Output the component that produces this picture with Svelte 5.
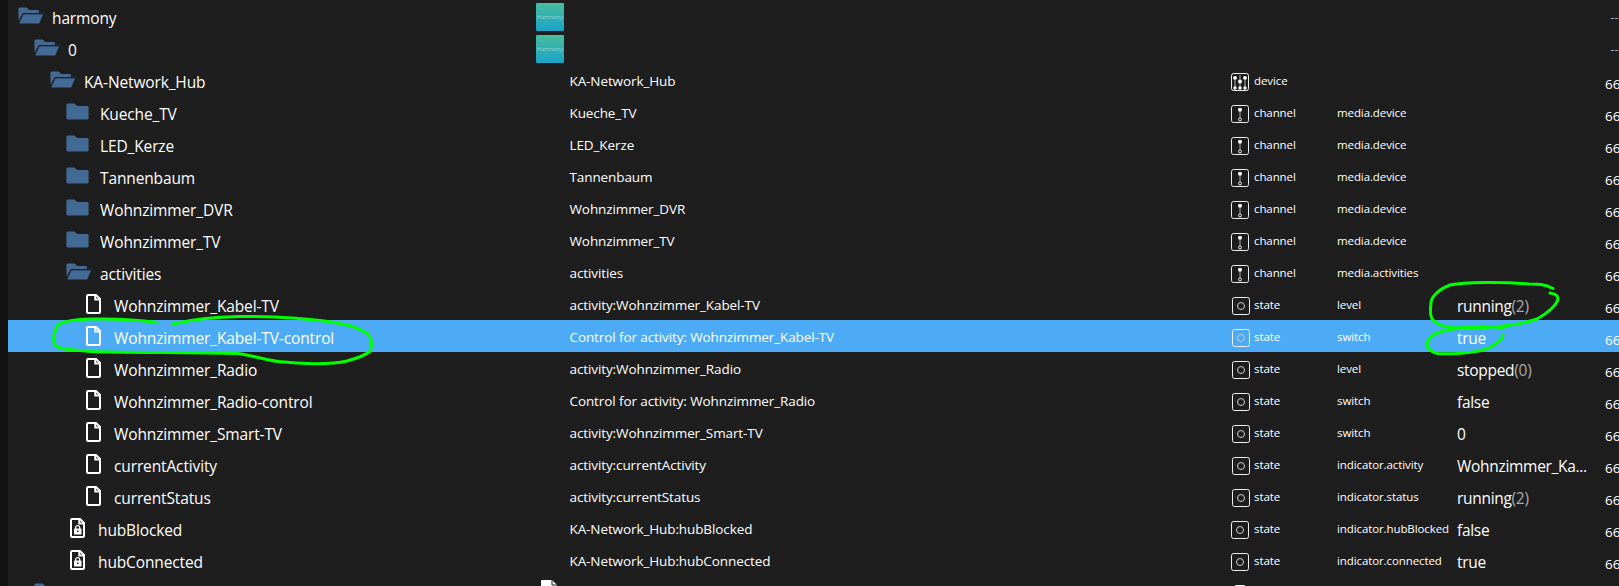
<script>
	const rows = [
		{ level: 0, icon: 'open', id: 'harmony', adapter: true },
		{ level: 1, icon: 'open', id: '0', adapter: true },
		{ level: 2, icon: 'open', id: 'KA-Network_Hub', name: 'KA-Network_Hub', type: 'device' },
		{ level: 3, icon: 'closed', id: 'Kueche_TV', name: 'Kueche_TV', type: 'channel', role: 'media.device' },
		{ level: 3, icon: 'closed', id: 'LED_Kerze', name: 'LED_Kerze', type: 'channel', role: 'media.device' },
		{ level: 3, icon: 'closed', id: 'Tannenbaum', name: 'Tannenbaum', type: 'channel', role: 'media.device' },
		{ level: 3, icon: 'closed', id: 'Wohnzimmer_DVR', name: 'Wohnzimmer_DVR', type: 'channel', role: 'media.device' },
		{ level: 3, icon: 'closed', id: 'Wohnzimmer_TV', name: 'Wohnzimmer_TV', type: 'channel', role: 'media.device' },
		{ level: 3, icon: 'open', id: 'activities', name: 'activities', type: 'channel', role: 'media.activities' },
		{ level: 4, icon: 'file', id: 'Wohnzimmer_Kabel-TV', name: 'activity:Wohnzimmer_Kabel-TV', type: 'state', role: 'level', value: 'running', raw: '(2)' },
		{ level: 4, icon: 'file', id: 'Wohnzimmer_Kabel-TV-control', name: 'Control for activity: Wohnzimmer_Kabel-TV', type: 'state', role: 'switch', value: 'true', selected: true },
		{ level: 4, icon: 'file', id: 'Wohnzimmer_Radio', name: 'activity:Wohnzimmer_Radio', type: 'state', role: 'level', value: 'stopped', raw: '(0)' },
		{ level: 4, icon: 'file', id: 'Wohnzimmer_Radio-control', name: 'Control for activity: Wohnzimmer_Radio', type: 'state', role: 'switch', value: 'false' },
		{ level: 4, icon: 'file', id: 'Wohnzimmer_Smart-TV', name: 'activity:Wohnzimmer_Smart-TV', type: 'state', role: 'switch', value: '0' },
		{ level: 4, icon: 'file', id: 'currentActivity', name: 'activity:currentActivity', type: 'state', role: 'indicator.activity', value: 'Wohnzimmer_Ka...' },
		{ level: 4, icon: 'file', id: 'currentStatus', name: 'activity:currentStatus', type: 'state', role: 'indicator.status', value: 'running', raw: '(2)' },
		{ level: 3, icon: 'lock', id: 'hubBlocked', name: 'KA-Network_Hub:hubBlocked', type: 'state', role: 'indicator.hubBlocked', value: 'false' },
		{ level: 3, icon: 'lock', id: 'hubConnected', name: 'KA-Network_Hub:hubConnected', type: 'state', role: 'indicator.connected', value: 'true' }
	];
</script>

{#snippet treeIcon(icon)}
	{#if icon === 'open'}
		<svg class="folder" width="26" height="18" viewBox="0 0 26 18">
			<path d="M.5 14V2Q.5.5 2 .5h6.5L11.500 3H19.500Q21 3 21 4.500V6H6.500Q4.800 6 4 7.300Z" />
			<path d="M6.500 7.300H25.200L21.500 15.700Q21.100 16.500 20 16.500H1.200L5 8.200Q5.500 7.300 6.500 7.300Z" />
		</svg>
	{:else if icon === 'closed'}
		<svg class="folder" width="26" height="18" viewBox="0 0 26 18">
			<path d="M2 .4H8.600L11.200 3H21Q22.600 3 22.600 4.600V15Q22.600 16.600 21 16.600H2Q.4 16.600.4 15V2Q.4.4 2 .4Z" />
		</svg>
	{:else}
		<svg class="file" width="16" height="20" viewBox="0 0 16 20">
			<path d="M1 2Q1 1 2 1H10L14 5V18Q14 19 13 19H2Q1 19 1 18Z" />
			<path d="M9.300 1V5.500H14" />
			{#if icon === 'lock'}
				<rect class="body" x="4" y="10.500" width="7.500" height="6" rx=".6" />
				<path class="shackle" d="M5.700 11V9.500Q5.700 7.600 7.700 7.600T9.700 9.500V11" />
				<rect class="hole" x="7" y="12.500" width="1.500" height="1.500" />
			{/if}
		</svg>
	{/if}
{/snippet}

{#snippet typeIcon(type)}
	<svg class="kind" width="18" height="18" viewBox="0 0 18 18">
		<rect x=".5" y=".5" width="17" height="17" rx="2" />
		{#if type === 'device'}
			<path class="track" d="M4 4v11M9 2v13M14 4v11" />
			<g class="dots">
				<circle cx="4" cy="4.800" r="1.900" />
				<circle cx="9" cy="8.500" r="1.900" />
				<circle cx="14" cy="4.800" r="1.900" />
				<circle cx="4" cy="15" r="1.700" />
				<circle cx="9" cy="15" r="1.700" />
				<circle cx="14" cy="15" r="1.700" />
			</g>
		{:else if type === 'channel'}
			<path class="track" d="M9 5v8" />
			<circle class="dots" cx="9" cy="4.700" r="2" />
			<circle cx="9" cy="14.500" r="1.500" />
		{:else}
			<circle class="ring" cx="9" cy="9" r="3.500" />
		{/if}
	</svg>
{/snippet}

<div class="browser">
	{#each rows as row}
		<div class="row" class:selected={row.selected}>
			<div class="id level-{row.level}">
				{@render treeIcon(row.icon)}
				<span>{row.id}</span>
			</div>
			<div class="logo">
				{#if row.adapter}<span class="adapter">Harmony</span>{/if}
			</div>
			<div class="name">{row.name ?? ''}</div>
			<div class="type" class:shifted={row.level === 4}>
				{#if row.type}
					{@render typeIcon(row.type)}
					<span>{row.type}</span>
				{/if}
			</div>
			<div class="role">{row.role ?? ''}</div>
			<div class="value">{row.value ?? ''}<span class="raw">{row.raw ?? ''}</span></div>
			<div class="acl" class:empty={row.adapter}>{row.adapter ? '---' : '664'}</div>
		</div>
	{/each}
	<div class="row">
		<div class="id level-1">{@render treeIcon('open')}</div>
		<div class="logo">
			<svg class="page" width="18" height="22" viewBox="0 0 18 22">
				<path d="M1 2Q1 1 2 1H12L17 6V21H1Z" />
				<path class="fold" d="M12 1V6H17" />
			</svg>
		</div>
		<div class="name"></div>
		<div class="type">
			<svg class="knob" width="18" height="18" viewBox="0 0 18 18">
				<rect x="3" y="0" width="12" height="16" rx="3" />
			</svg>
		</div>
	</div>

	<!-- marker strokes over the activity rows -->
	<svg class="marker" width="1619" height="586" viewBox="0 0 1619 586">
		<path d="M157 322.500C140 320 115 318.500 92 319C75 319.500 60 321.500 57 326C54 333 53 341 55 345C60 350 75 350 92 351.500C130 353 190 352 238 353.500C250 355 265 360 278 361.500C300 364 330 365 347 361C358 358 367 354 370.500 351C372 343 372 338 368 334C360 329 350 325 342 324C320 319 275 316 240 316.500C210 317 185 321 173 324" />
		<path d="M1553 288.500C1545 284 1537 284 1529 284C1500 281.500 1465 282 1450 285C1437 290 1431 298 1431 303C1430 311 1430 317 1433 320C1438 325 1448 328 1459 328C1490 328 1520 325 1537 319C1548 313 1558 304 1558 298C1557 294 1554 294 1550 293" />
		<path d="M1503 328.500C1490 325 1465 326 1447 330C1433 333 1428 339 1427 344C1427 349 1432 353 1438 353.500C1455 354 1477 354 1491 347C1499 342 1503 338 1503 335" />
	</svg>
</div>

<style>
	:global(body) {
		margin: 0;
		background: #121212;
	}

	.browser {
		position: relative;
		box-sizing: border-box;
		height: 586px;
		padding-left: 8px;
		overflow: hidden;
		color: #fff;
		font-family: 'Open Sans', 'Noto Sans', sans-serif;
		background: #121212;
	}

	.row {
		display: grid;
		grid-template-columns: 528px 33px 660px 108px 120px 149px 39px;
		height: 32px;
		align-items: center;
		white-space: nowrap;
		background: #1e1e1e;
	}

	.selected {
		background: #4dabf5;
	}

	.id {
		display: flex;
		align-items: center;
		padding-left: 10px;
		font-size: 15.5px;
		letter-spacing: -0.13px;
	}

	.id span {
		padding-top: 3px;
	}

	.level-1 {
		padding-left: 26px;
	}

	.level-2 {
		padding-left: 42px;
	}

	.level-3 {
		padding-left: 58px;
	}

	.level-4 {
		padding-left: 74px;
	}

	.folder {
		margin: 0 8px 1px 0;
		fill: #436a93;
	}

	.file {
		margin: 0 12px 0 4px;
		fill: none;
		stroke: #fff;
		stroke-width: 2;
	}

	.file .body {
		fill: #fff;
		stroke: none;
	}

	.file .shackle {
		stroke-width: 1.2;
	}

	.file .hole {
		fill: #1e1e1e;
		stroke: none;
	}

	.logo {
		height: 28px;
		padding-top: 2px;
	}

	.adapter {
		display: flex;
		width: 28px;
		height: 28px;
		align-items: center;
		justify-content: center;
		border-radius: 1px;
		color: #8fd5d5;
		font-size: 6px;
		background: linear-gradient(#48bd9c, #1ba3c9);
	}

	.name {
		padding: 2px 0 0 0.5px;
		font-size: 13.5px;
		letter-spacing: -0.1px;
	}

	.type {
		display: flex;
		gap: 5px;
		padding: 1px 0 0 2px;
		font-size: 11.5px;
		letter-spacing: -0.1px;
	}

	.type span {
		padding-top: 2px;
	}

	.kind {
		margin-top: 2px;
		fill: none;
		stroke: #eee;
	}

	.kind .track {
		stroke: #aaa;
	}

	.kind .dots {
		fill: #fff;
		stroke: none;
	}

	.kind .ring {
		stroke: #ccc;
	}

	.shifted {
		gap: 4px;
		padding-left: 3px;
	}

	.role {
		padding-top: 1px;
		font-size: 11.5px;
		letter-spacing: -0.1px;
	}

	.value {
		padding-top: 3px;
		font-size: 15.5px;
		letter-spacing: -0.3px;
	}

	.raw {
		color: #aaa;
	}

	.acl {
		padding-top: 8px;
		margin-left: -1px;
		font-size: 13.5px;
	}

	.empty {
		padding: 1px 0 0 5px;
		color: #aaa;
	}

	.page {
		margin-left: 4px;
		fill: #fff;
	}

	.fold {
		fill: none;
		stroke: #1e1e1e;
	}

	.knob {
		margin-top: 2px;
		fill: #fff;
	}

	.marker {
		position: absolute;
		top: 0;
		left: 0;
		fill: none;
		stroke: #0f0;
		stroke-width: 3;
		stroke-linecap: round;
		stroke-linejoin: round;
	}
</style>
